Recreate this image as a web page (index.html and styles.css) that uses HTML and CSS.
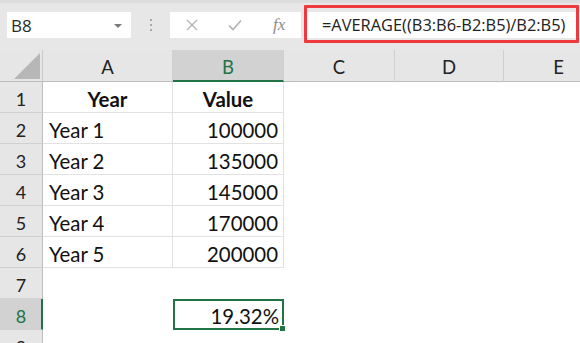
FILE: index.html
```html
<!DOCTYPE html>
<html>
<head>
<meta charset="utf-8">
<link rel="stylesheet" href="styles.css">
</head>
<body>
<div class="app">
  <div class="toolbar">
    <div class="namebox">
      <span class="nb-text">B8</span>
      <svg class="caret" width="10" height="6" viewBox="0 0 10 6"><path d="M1 1h8L5 5z" fill="#7a7a7a"/></svg>
    </div>
    <div class="grip"><i></i><i></i><i></i></div>
    <div class="fbar">
      <div class="fbtns">
        <svg class="ico" width="14" height="14" viewBox="0 0 14 14"><path d="M2 2l10 10M12 2L2 12" stroke="#b3b3b3" stroke-width="1.4" fill="none"/></svg>
        <svg class="ico" width="16" height="14" viewBox="0 0 16 14"><path d="M2 7.5l4 4L14 2.5" stroke="#b3b3b3" stroke-width="1.6" fill="none"/></svg>
        <span class="fx">fx</span>
      </div>
      <div class="finput">=AVERAGE((B3:B6-B2:B5)/B2:B5)</div>
    </div>
    <div class="annot"></div>
  </div>
  <div class="sheet">
    <div class="corner"><svg width="28" height="28" viewBox="0 0 28 28"><path d="M27 1V27H1z" fill="#b7b7b7"/></svg></div>
    <div class="ch">A</div>
    <div class="ch csel">B</div>
    <div class="ch">C</div>
    <div class="ch">D</div>
    <div class="ch">E</div>

    <div class="rh">1</div>
    <div class="c g bold center">Year</div>
    <div class="c g bold center">Value</div>
    <div class="c"></div><div class="c"></div><div class="c"></div>

    <div class="rh">2</div>
    <div class="c g">Year 1</div>
    <div class="c g num">100000</div>
    <div class="c"></div><div class="c"></div><div class="c"></div>

    <div class="rh">3</div>
    <div class="c g">Year 2</div>
    <div class="c g num">135000</div>
    <div class="c"></div><div class="c"></div><div class="c"></div>

    <div class="rh">4</div>
    <div class="c g">Year 3</div>
    <div class="c g num">145000</div>
    <div class="c"></div><div class="c"></div><div class="c"></div>

    <div class="rh">5</div>
    <div class="c g">Year 4</div>
    <div class="c g num">170000</div>
    <div class="c"></div><div class="c"></div><div class="c"></div>

    <div class="rh">6</div>
    <div class="c g">Year 5</div>
    <div class="c g num">200000</div>
    <div class="c"></div><div class="c"></div><div class="c"></div>

    <div class="rh">7</div>
    <div class="c"></div><div class="c"></div><div class="c"></div><div class="c"></div><div class="c"></div>

    <div class="rh rsel">8</div>
    <div class="c"></div>
    <div class="c num sel">19.32%<span class="handle"></span></div>
    <div class="c"></div><div class="c"></div><div class="c"></div>

    <div class="rh">9</div>
    <div class="c"></div><div class="c"></div><div class="c"></div><div class="c"></div><div class="c"></div>
  </div>
</div>
</body>
</html>
```

FILE: styles.css
```css
html, body {
  margin: 0;
  padding: 0;
  background: #ffffff;
  overflow: hidden;
}
.app {
  width: 580px;
  height: 343px;
  overflow: hidden;
  position: relative;
}
.toolbar {
  position: relative;
  height: 50px;
  background: #e7e7e7;
  border-top: 3px solid #dcdcdc;
  box-sizing: border-box;
  display: flex;
  align-items: flex-start;
  padding-top: 9px;
  padding-left: 7px;
}
.namebox {
  width: 124px;
  height: 26px;
  background: #ffffff;
  display: flex;
  align-items: center;
  justify-content: space-between;
  box-sizing: border-box;
  padding: 0 8px 0 4px;
}
.nb-text {
  font-family: "Open Sans", sans-serif;
  font-size: 17px;
  color: #2b2b2b;
}
.caret { margin-top: 1px; }
.grip {
  width: 39px;
  height: 26px;
  display: flex;
  flex-direction: column;
  align-items: center;
  justify-content: center;
  gap: 3px;
}
.grip i {
  display: block;
  width: 2px;
  height: 2px;
  background: #a8a8a8;
}
.fbar {
  flex: 1;
  height: 26px;
  display: flex;
}
.fbtns {
  width: 131px;
  background: #ffffff;
  display: flex;
  align-items: center;
  padding-left: 15px;
  box-sizing: border-box;
  gap: 0;
}
.fbtns .ico:first-child { margin-right: 28px; }
.fbtns .ico:nth-child(2) { margin-right: 30px; }
.fx {
  font-family: "Liberation Serif", serif;
  font-style: italic;
  font-size: 17px;
  color: #8c8c8c;
}
.finput {
  flex: 1;
  margin-left: 4px;
  background: #ffffff;
  font-family: "Open Sans", sans-serif;
  font-size: 16.4px;
  color: #222;
  line-height: 26px;
  padding-left: 17px;
  white-space: nowrap;
}
.annot {
  position: absolute;
  left: 304px;
  top: 2px;
  width: 275px;
  height: 38px;
  border: 3px solid #ee3a3f;
  box-sizing: border-box;
  border-radius: 1px;
}
.sheet {
  display: grid;
  grid-template-columns: 43px 130px 111px 111px 109px 110px;
  grid-template-rows: 32px repeat(9, 31px);
  font-family: "Lato", sans-serif;
}
.corner {
  background: #e6e6e6;
  border-bottom: 1px solid #bdbdbd;
  border-right: 1px solid #c9c9c9;
  box-sizing: border-box;
  display: flex;
  align-items: flex-end;
  justify-content: flex-end;
  padding: 0 1px 1px 0;
}
.ch {
  background: #e6e6e6;
  border-bottom: 1px solid #bdbdbd;
  border-right: 1px solid #d0d0d0;
  box-sizing: border-box;
  display: flex;
  align-items: center;
  justify-content: center;
  font-size: 18.5px;
  color: #222;
  padding-top: 2px;
}
.ch.csel {
  background: #d2d2d2;
  color: #217346;
  border-bottom: 2px solid #217346;
  padding-top: 3px;
}
.rh {
  background: #e6e6e6;
  border-right: 1px solid #bdbdbd;
  border-bottom: 1px solid #d0d0d0;
  box-sizing: border-box;
  display: flex;
  align-items: center;
  justify-content: center;
  font-size: 18px;
  color: #222;
  padding-top: 3px;
}
.rh.rsel {
  background: #d2d2d2;
  color: #217346;
  border-right: 2px solid #217346;
  padding-left: 1px;
}
.c {
  box-sizing: border-box;
  display: flex;
  align-items: center;
  font-size: 20.4px;
  color: #111;
  padding: 3px 5px 0 6px;
  white-space: nowrap;
  position: relative;
}
.c.g {
  border-right: 1px solid #e2e2e2;
  border-bottom: 1px solid #e2e2e2;
}
.bold { font-weight: 700; }
.center { justify-content: center; padding-left: 0; padding-right: 0; }
.num { justify-content: flex-end; }
.sel {
  border: 2px solid #217346;
  padding: 2px 3px 0 4px;
}
.handle {
  position: absolute;
  right: -4px;
  bottom: -4px;
  width: 5px;
  height: 5px;
  background: #217346;
  border: 1px solid #ffffff;
}
```
